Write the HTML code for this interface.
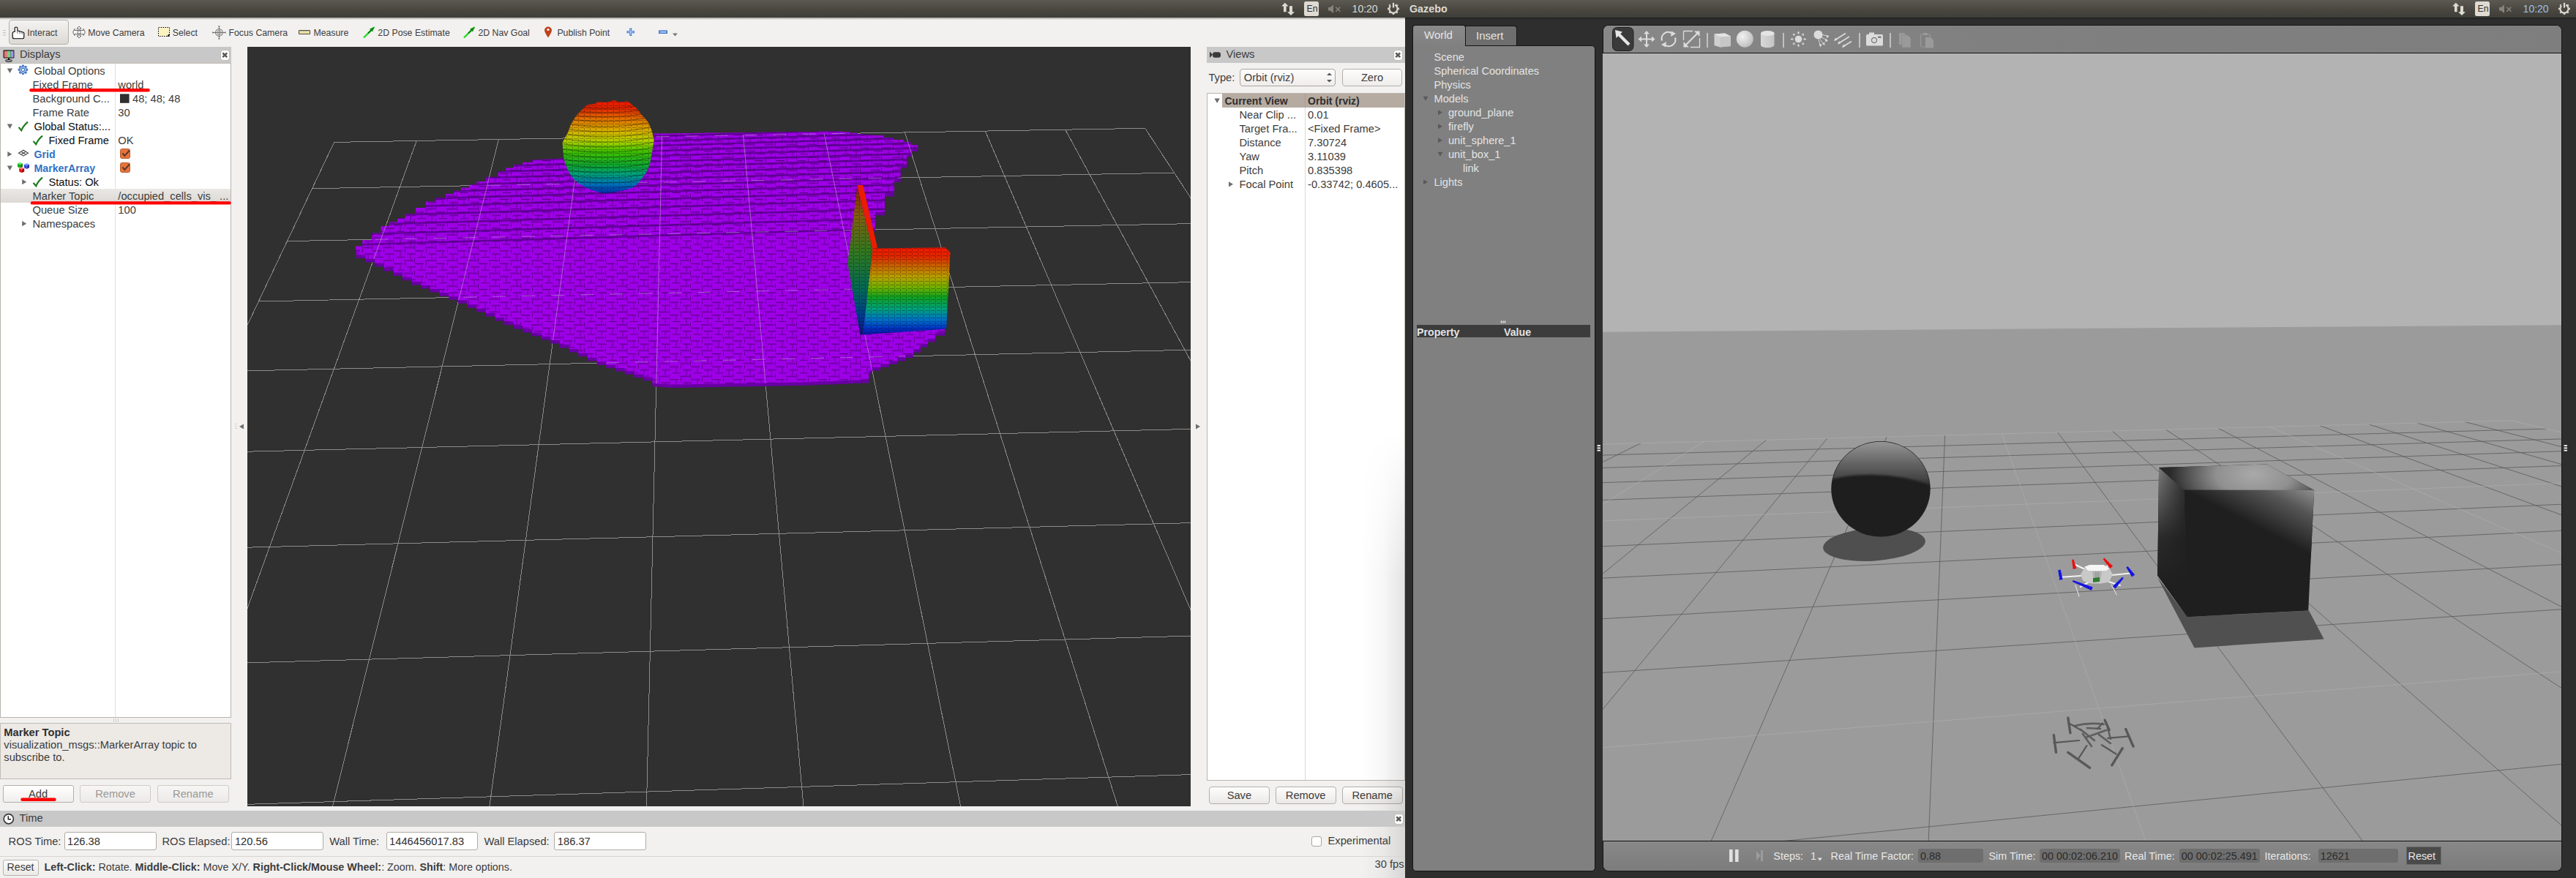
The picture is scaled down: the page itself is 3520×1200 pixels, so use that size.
<!DOCTYPE html><html><head><meta charset="utf-8"><style>html,body{margin:0;padding:0;}body{width:3520px;height:1200px;overflow:hidden;position:relative;background:#f2f1f0;font-family:"Liberation Sans",sans-serif;}.r{position:absolute;}.t{position:absolute;white-space:nowrap;}b{font-weight:bold;}</style></head><body><div class="r" style="left:0px;top:24px;width:1920px;height:1176px;background:#f2f1f0;"></div><div class="r" style="left:0px;top:24px;width:1920px;height:40px;background:#f2f1f0;"></div><div class="r" style="left:12px;top:27px;width:82px;height:34px;border:1px solid #b5b1ab;border-radius:4px;box-sizing:border-box;background:linear-gradient(#f4f3f1,#dcd9d5);"></div><svg class="r" style="left:0;top:24px" width="960" height="40" viewBox="0 24 960 40"><path d="M4 41.5h4M4 44.7h4M4 47.9h4" stroke="#c9c6c2" stroke-width="1.2"/><path d="M20.2 44 V38.3 Q20.2 37 22 37 Q23.8 37 23.8 38.3 V42.3 H25.8 Q27 42.3 27 43.2 H28.7 Q30.2 43.2 30.2 44 H31.3 Q32.8 44 32.8 45.2 V50.8 Q32.8 52.8 31 52.8 H19.5 Q17.2 52.8 17.2 50.5 V45.5 Q17.2 43.5 19.2 43.5 H20.2 Z" fill="#fff" stroke="#000" stroke-width="1.1"/><path d="M23.8 42.5v3.5M27 43.5v3M30.2 44.3v2.7" stroke="#555" stroke-width="0.8"/><g transform="translate(108 44)" stroke="#555" fill="#fff" stroke-width="0.9"><path d="M0 -8 L-3 -5 L-1 -5 L-1 -2.5 L-6 -2.5 L-6 -4.5 L-8 -1 L-8 1 L-6 4.5 L-6 2.5 L-1 2.5 L-1 5 L-3 5 L0 8 L3 5 L1 5 L1 2.5 L6 2.5 L6 4.5 L8 1 L8 -1 L6 -4.5 L6 -2.5 L1 -2.5 L1 -5 L3 -5 Z"/><circle r="2.2" fill="none"/></g><rect x="216.5" y="37.5" width="15" height="12" fill="#fbf4c0" stroke="#000" stroke-width="1" stroke-dasharray="1.5 1.5"/><path d="M228 49.5 L231.5 46 L231.5 49.5 Z" fill="#000"/><g transform="translate(299.4 44.5)" fill="none" stroke="#707070" stroke-width="1"><circle r="5"/><path d="M0 -8.5V8.5M-8.5 0H8.5"/><path d="M-2.5 -2.5h5v5h-5z" stroke-width="0.7"/><path d="M-1 -8.5h2M-1 8.5h2M-8.5 -1v2M8.5 -1v2" stroke-width="1.5"/></g><rect x="408.5" y="41.5" width="15" height="5" rx="0.8" fill="#efe6a6" stroke="#4a4a4a" stroke-width="1.1"/><path d="M411 42v2M413 42v1.5M415 42v2M417 42v1.5M419 42v2M421 42v1.5" stroke="#777" stroke-width="0.5"/><path d="M497 51.5 L511.5 37" stroke="#22dd22" stroke-width="2.4"/><path d="M511.5 37 L505 39.5 L509 43.5 Z" fill="#118811"/><path d="M503 45.5 L507 41.5" stroke="#0a5a0a" stroke-width="1.4"/><path d="M634 51.5 L648.5 37" stroke="#22dd22" stroke-width="2.4"/><path d="M648.5 37 L642 39.5 L646 43.5 Z" fill="#118811"/><path d="M640 45.5 L644 41.5" stroke="#0a5a0a" stroke-width="1.4"/><path d="M749 51.5 Q744 44 744 41.5 A5 5 0 0 1 754 41.5 Q754 44 749 51.5 Z" fill="#c0421c"/><circle cx="749" cy="40.5" r="1.6" fill="#fff"/><path d="M861.8 38.5V49M856.5 43.8H867" stroke="#3a72c8" stroke-width="3"/><path d="M861.8 39.5V48M857.5 43.8H866" stroke="#cfe0ff" stroke-width="1"/><rect x="900" y="41.5" width="12" height="4.5" fill="#3a72c8"/><rect x="901.5" y="43" width="9" height="1.5" fill="#cfe0ff"/><path d="M919 45.5 L926 45.5 L922.5 49.5 Z" fill="#777"/></svg><div class="t" style="left:37.3px;top:38.8px;font-size:12.3px;line-height:12.3px;color:#3c3c3c;font-weight:normal;">Interact</div><div class="t" style="left:120.3px;top:38.8px;font-size:12.3px;line-height:12.3px;color:#3c3c3c;font-weight:normal;">Move Camera</div><div class="t" style="left:235.8px;top:38.8px;font-size:12.3px;line-height:12.3px;color:#3c3c3c;font-weight:normal;">Select</div><div class="t" style="left:312.5px;top:38.8px;font-size:12.3px;line-height:12.3px;color:#3c3c3c;font-weight:normal;">Focus Camera</div><div class="t" style="left:428.4px;top:38.8px;font-size:12.3px;line-height:12.3px;color:#3c3c3c;font-weight:normal;">Measure</div><div class="t" style="left:516.3px;top:38.8px;font-size:12.3px;line-height:12.3px;color:#3c3c3c;font-weight:normal;">2D Pose Estimate</div><div class="t" style="left:653.4px;top:38.8px;font-size:12.3px;line-height:12.3px;color:#3c3c3c;font-weight:normal;">2D Nav Goal</div><div class="t" style="left:761.4px;top:38.8px;font-size:12.3px;line-height:12.3px;color:#3c3c3c;font-weight:normal;">Publish Point</div><div class="r" style="left:0px;top:64px;width:316px;height:22px;background:#c8c8c8;"></div><svg class="r" style="left:0;top:64px" width="24" height="22"><rect x="4.6" y="4.6" width="14.8" height="10.8" rx="1" fill="#000"/><rect x="5.6" y="5.6" width="4.4" height="9" fill="#e07a7a"/><rect x="10" y="5.6" width="4.6" height="9" fill="#7ad07a"/><rect x="14.6" y="5.6" width="4" height="9" fill="#9a9ae8"/><path d="M11 15.5h2v2h-2z" fill="#000"/><ellipse cx="12" cy="19" rx="4.6" ry="1.3" fill="none" stroke="#000" stroke-width="1"/></svg><div class="t" style="left:27.0px;top:67.4px;font-size:14.7px;line-height:14.7px;color:#3c3c3c;font-weight:normal;">Displays</div><div class="r" style="left:301px;top:68px;width:12.5px;height:14.5px;box-sizing:border-box;border:1px solid #c2bcb4;border-radius:4px;background:#fff;"></div><svg class="r" style="left:301px;top:68px" width="13" height="15"><path d="M3.3 4.3L9.2 10.2M9.2 4.3L3.3 10.2" stroke="#5a5a5a" stroke-width="2.6"/></svg><div class="r" style="left:0px;top:86px;width:316px;height:895px;background:#fff;border:1px solid #b9b5af;border-top-color:#c2beb8;box-sizing:border-box;"></div><div class="r" style="left:157px;top:87px;width:1px;height:893px;background:#e4e2df;"></div><div class="r" style="left:1px;top:258px;width:314px;height:19px;background:linear-gradient(#eae8e5,#dcd9d5);"></div><div class="t" style="left:46.5px;top:89.9px;font-size:14.7px;line-height:14.7px;color:#3c3c3c;font-weight:normal;">Global Options</div><div class="t" style="left:44.5px;top:108.9px;font-size:14.7px;line-height:14.7px;color:#3c3c3c;font-weight:normal;">Fixed Frame</div><div class="t" style="left:161.3px;top:108.9px;font-size:14.7px;line-height:14.7px;color:#3c3c3c;font-weight:normal;">world</div><div class="t" style="left:44.5px;top:127.9px;font-size:14.7px;line-height:14.7px;color:#3c3c3c;font-weight:normal;">Background C...</div><div class="t" style="left:181.0px;top:127.9px;font-size:14.7px;line-height:14.7px;color:#3c3c3c;font-weight:normal;">48; 48; 48</div><div class="t" style="left:44.5px;top:146.9px;font-size:14.7px;line-height:14.7px;color:#3c3c3c;font-weight:normal;">Frame Rate</div><div class="t" style="left:161.3px;top:146.9px;font-size:14.7px;line-height:14.7px;color:#3c3c3c;font-weight:normal;">30</div><div class="t" style="left:46.5px;top:165.9px;font-size:14.7px;line-height:14.7px;color:#0c0c0c;font-weight:normal;">Global Status:...</div><div class="t" style="left:66.4px;top:184.9px;font-size:14.7px;line-height:14.7px;color:#0c0c0c;font-weight:normal;">Fixed Frame</div><div class="t" style="left:161.3px;top:184.9px;font-size:14.7px;line-height:14.7px;color:#3c3c3c;font-weight:normal;">OK</div><div class="t" style="left:46.5px;top:204.3px;font-size:14.2px;line-height:14.2px;color:#2f72c4;font-weight:bold;">Grid</div><div class="t" style="left:46.5px;top:223.3px;font-size:14.2px;line-height:14.2px;color:#2f72c4;font-weight:bold;">MarkerArray</div><div class="t" style="left:66.4px;top:241.9px;font-size:14.7px;line-height:14.7px;color:#0c0c0c;font-weight:normal;">Status: Ok</div><div class="t" style="left:44.5px;top:260.9px;font-size:14.7px;line-height:14.7px;color:#3c3c3c;font-weight:normal;">Marker Topic</div><div class="t" style="left:161.3px;top:260.9px;font-size:14.7px;line-height:14.7px;color:#3c3c3c;font-weight:normal;">/occupied_cells_vis_ ...</div><div class="t" style="left:44.5px;top:279.9px;font-size:14.7px;line-height:14.7px;color:#3c3c3c;font-weight:normal;">Queue Size</div><div class="t" style="left:161.3px;top:279.9px;font-size:14.7px;line-height:14.7px;color:#3c3c3c;font-weight:normal;">100</div><div class="t" style="left:44.5px;top:298.9px;font-size:14.7px;line-height:14.7px;color:#3c3c3c;font-weight:normal;">Namespaces</div><svg class="r" style="left:0;top:0" width="320" height="320"><path d="M9.8 93.5 L17.1 93.5 L13.450000000000001 99.9 Z" fill="#6e6e6e"/><g transform="translate(31.4 95.3)"><path d="M4.25 -1.76 L4.53 -0.79 L6.15 -0.78 L6.15 0.78 L4.53 0.79 L4.25 1.76 L3.76 2.65 L4.90 3.80 L3.80 4.90 L2.65 3.76 L1.76 4.25 L0.79 4.53 L0.78 6.15 L-0.78 6.15 L-0.79 4.53 L-1.76 4.25 L-2.65 3.76 L-3.80 4.90 L-4.90 3.80 L-3.76 2.65 L-4.25 1.76 L-4.53 0.79 L-6.15 0.78 L-6.15 -0.78 L-4.53 -0.79 L-4.25 -1.76 L-3.76 -2.65 L-4.90 -3.80 L-3.80 -4.90 L-2.65 -3.76 L-1.76 -4.25 L-0.79 -4.53 L-0.78 -6.15 L0.78 -6.15 L0.79 -4.53 L1.76 -4.25 L2.65 -3.76 L3.80 -4.90 L4.90 -3.80 L3.76 -2.65 Z" fill="#c5d6ef" stroke="#3a72c0" stroke-width="1.3" stroke-linejoin="round"/><circle r="2.2" fill="#fff" stroke="#3a72c0" stroke-width="1.2"/></g><path d="M9.8 169.5 L17.1 169.5 L13.450000000000001 175.89999999999998 Z" fill="#6e6e6e"/><path d="M25.5 173.89999999999998 L29.2 178.2 Q32 171.7 38 166.7" fill="none" stroke="#1d7a1d" stroke-width="2.2"/><path d="M45.5 192.89999999999998 L49.2 197.2 Q52 190.7 58 185.7" fill="none" stroke="#1d7a1d" stroke-width="2.2"/><path d="M10.3 207.1 L16.3 210.7 L10.3 214.29999999999998 Z" fill="#6e6e6e"/><g transform="translate(32 209.2)" fill="none" stroke="#444" stroke-width="1.1"><path d="M-6.5 0 L0 -4 L6.5 0 L0 4 Z M-3.25 -2 L3.25 2 M3.25 -2 L-3.25 2"/></g><path d="M9.8 226.5 L17.1 226.5 L13.450000000000001 232.89999999999998 Z" fill="#6e6e6e"/><path d="M24 223.45 L27.5 221.7 L31 223.45 L27.5 225.2 Z" fill="#66ee66"/><path d="M24 223.45 L27.5 225.2 L27.5 229.75 L24 228.0 Z" fill="#11aa11"/><path d="M31 223.45 L27.5 225.2 L27.5 229.75 L31 228.0 Z" fill="#008800"/><path d="M33 224.64999999999998 L36.5 222.89999999999998 L40 224.64999999999998 L36.5 226.39999999999998 Z" fill="#8899ff"/><path d="M33 224.64999999999998 L36.5 226.39999999999998 L36.5 230.95 L33 229.2 Z" fill="#3344dd"/><path d="M40 224.64999999999998 L36.5 226.39999999999998 L36.5 230.95 L40 229.2 Z" fill="#2233bb"/><path d="M26.2 230.04999999999998 L29.7 228.29999999999998 L33.2 230.04999999999998 L29.7 231.79999999999998 Z" fill="#ff7777"/><path d="M26.2 230.04999999999998 L29.7 231.79999999999998 L29.7 236.35 L26.2 234.6 Z" fill="#dd1111"/><path d="M33.2 230.04999999999998 L29.7 231.79999999999998 L29.7 236.35 L33.2 234.6 Z" fill="#aa0000"/><path d="M30.2 245.1 L36.2 248.7 L30.2 252.29999999999998 Z" fill="#6e6e6e"/><path d="M45.5 249.89999999999998 L49.2 254.2 Q52 247.7 58 242.7" fill="none" stroke="#1d7a1d" stroke-width="2.2"/><path d="M30.2 302.09999999999997 L36.2 305.7 L30.2 309.3 Z" fill="#6e6e6e"/><rect x="164.5" y="203.5" width="13" height="13" rx="2.2" fill="#e8733a" stroke="#b65a2d" stroke-width="1"/><path d="M167.3 209.3 L170.3 213.0 L177 205.5" fill="none" stroke="#5a3a2a" stroke-width="2"/><rect x="164.5" y="222.5" width="13" height="13" rx="2.2" fill="#e8733a" stroke="#b65a2d" stroke-width="1"/><path d="M167.3 228.3 L170.3 232.0 L177 224.5" fill="none" stroke="#5a3a2a" stroke-width="2"/><rect x="164" y="128.4" width="12.6" height="12.4" fill="#303030"/><path d="M42.5 123.2 L202.5 123.2" stroke="#f00" stroke-width="4.6" stroke-linecap="round"/><path d="M44 277.4 L313.5 277.4" stroke="#f00" stroke-width="4.4" stroke-linecap="round"/></svg><svg class="r" style="left:150px;top:980px" width="20" height="8"><path d="M5.5 2v5M8.5 2v5M11.5 2v5" stroke="#c9c6c2" stroke-width="0.9"/></svg><div class="r" style="left:0px;top:988px;width:316px;height:77px;background:#ede9e5;border:1px solid #c0bcb6;box-sizing:border-box;"></div><div class="t" style="left:5.3px;top:993.6px;font-size:14.7px;line-height:14.7px;color:#2f2f2f;font-weight:bold;">Marker Topic</div><div class="t" style="left:5.3px;top:1010.6px;font-size:14.7px;line-height:14.7px;color:#3c3c3c;font-weight:normal;">visualization_msgs::MarkerArray topic to</div><div class="t" style="left:5.3px;top:1027.6px;font-size:14.7px;line-height:14.7px;color:#3c3c3c;font-weight:normal;">subscribe to.</div><div class="r" style="left:3.5px;top:1072.5px;width:97.0px;height:24px;box-sizing:border-box;border:1px solid #b3afa9;border-radius:3px;background:linear-gradient(#ffffff,#f0eeec);"></div><div class="t" style="left:-248.0px;width:600px;text-align:center;top:1077.6px;font-size:14.7px;line-height:14.7px;color:#3c3c3c;font-weight:normal;">Add</div><div class="r" style="left:109px;top:1072.5px;width:97px;height:24px;box-sizing:border-box;border:1px solid #cfcbc6;border-radius:3px;background:linear-gradient(#f7f6f5,#eceae8);"></div><div class="t" style="left:-142.5px;width:600px;text-align:center;top:1077.6px;font-size:14.7px;line-height:14.7px;color:#9a9895;font-weight:normal;">Remove</div><div class="r" style="left:215px;top:1072.5px;width:97.5px;height:24px;box-sizing:border-box;border:1px solid #cfcbc6;border-radius:3px;background:linear-gradient(#f7f6f5,#eceae8);"></div><div class="t" style="left:-36.2px;width:600px;text-align:center;top:1077.6px;font-size:14.7px;line-height:14.7px;color:#9a9895;font-weight:normal;">Rename</div><svg class="r" style="left:0;top:1080px" width="120" height="20"><path d="M30.5 12.8 L74.5 12.8" stroke="#f00" stroke-width="4.4" stroke-linecap="round"/></svg><div class="r" style="left:1649px;top:64px;width:271px;height:22px;background:#c8c8c8;"></div><svg class="r" style="left:1649px;top:64px" width="22" height="22"><path d="M4 6.5 L8 10.8 L4 15Z" fill="#3a3a3a"/><rect x="8" y="7.3" width="11" height="7.5" rx="3" fill="#3a3a3a"/></svg><div class="t" style="left:1675.5px;top:67.4px;font-size:14.7px;line-height:14.7px;color:#3c3c3c;font-weight:normal;">Views</div><div class="r" style="left:1904px;top:68px;width:12.5px;height:14.5px;box-sizing:border-box;border:1px solid #c2bcb4;border-radius:4px;background:#fff;"></div><svg class="r" style="left:1904px;top:68px" width="13" height="15"><path d="M3.3 4.3L9.2 10.2M9.2 4.3L3.3 10.2" stroke="#5a5a5a" stroke-width="2.6"/></svg><div class="t" style="left:1651.4px;top:99.1px;font-size:14.7px;line-height:14.7px;color:#3c3c3c;font-weight:normal;">Type:</div><div class="r" style="left:1694px;top:93.5px;width:131px;height:24px;box-sizing:border-box;border:1px solid #aaa6a0;border-radius:4px;background:linear-gradient(#fdfdfd,#efedeb);"></div><div class="t" style="left:1699.8px;top:99.1px;font-size:14.7px;line-height:14.7px;color:#3c3c3c;font-weight:normal;">Orbit (rviz)</div><svg class="r" style="left:1810px;top:95px" width="14" height="22"><path d="M3 8 L10 8 L6.5 4.5 Z M3 14 L10 14 L6.5 17.5 Z" fill="#555"/></svg><div class="r" style="left:1834px;top:93.5px;width:82px;height:24px;box-sizing:border-box;border:1px solid #b3afa9;border-radius:4px;background:linear-gradient(#fdfdfd,#efedeb);"></div><div class="t" style="left:1575.0px;width:600px;text-align:center;top:99.1px;font-size:14.7px;line-height:14.7px;color:#3c3c3c;font-weight:normal;">Zero</div><div class="r" style="left:1649px;top:127px;width:271px;height:940px;background:#fff;border:1px solid #b9b5af;border-right:none;box-sizing:border-box;"></div><div class="r" style="left:1670px;top:128px;width:250px;height:19px;background:#b6aba1;"></div><div class="r" style="left:1783px;top:128px;width:1px;height:938px;background:#dcdad7;"></div><div class="r" style="left:1783px;top:128px;width:1px;height:19px;background:#a89d93;"></div><div class="t" style="left:1673.5px;top:131.1px;font-size:14.0px;line-height:14.0px;color:#2e2e2e;font-weight:bold;">Current View</div><div class="t" style="left:1787.0px;top:131.1px;font-size:14.0px;line-height:14.0px;color:#2e2e2e;font-weight:bold;">Orbit (rviz)</div><div class="t" style="left:1693.5px;top:149.6px;font-size:14.7px;line-height:14.7px;color:#3c3c3c;font-weight:normal;">Near Clip ...</div><div class="t" style="left:1787.0px;top:149.6px;font-size:14.7px;line-height:14.7px;color:#3c3c3c;font-weight:normal;">0.01</div><div class="t" style="left:1693.5px;top:168.6px;font-size:14.7px;line-height:14.7px;color:#3c3c3c;font-weight:normal;">Target Fra...</div><div class="t" style="left:1787.0px;top:168.6px;font-size:14.7px;line-height:14.7px;color:#3c3c3c;font-weight:normal;">&lt;Fixed Frame&gt;</div><div class="t" style="left:1693.5px;top:187.6px;font-size:14.7px;line-height:14.7px;color:#3c3c3c;font-weight:normal;">Distance</div><div class="t" style="left:1787.0px;top:187.6px;font-size:14.7px;line-height:14.7px;color:#3c3c3c;font-weight:normal;">7.30724</div><div class="t" style="left:1693.5px;top:206.6px;font-size:14.7px;line-height:14.7px;color:#3c3c3c;font-weight:normal;">Yaw</div><div class="t" style="left:1787.0px;top:206.6px;font-size:14.7px;line-height:14.7px;color:#3c3c3c;font-weight:normal;">3.11039</div><div class="t" style="left:1693.5px;top:225.6px;font-size:14.7px;line-height:14.7px;color:#3c3c3c;font-weight:normal;">Pitch</div><div class="t" style="left:1787.0px;top:225.6px;font-size:14.7px;line-height:14.7px;color:#3c3c3c;font-weight:normal;">0.835398</div><div class="t" style="left:1693.5px;top:244.6px;font-size:14.7px;line-height:14.7px;color:#3c3c3c;font-weight:normal;">Focal Point</div><div class="t" style="left:1787.0px;top:244.6px;font-size:14.7px;line-height:14.7px;color:#3c3c3c;font-weight:normal;">-0.33742; 0.4605...</div><svg class="r" style="left:1640px;top:120px" width="60" height="160" viewBox="1640 120 60 160"><path d="M1659.5 134.60000000000002 L1666.8 134.60000000000002 L1663.15 141.0 Z" fill="#6e6e6e"/><path d="M1679 248.20000000000002 L1685 251.8 L1679 255.4 Z" fill="#6e6e6e"/></svg><div class="r" style="left:1652.3px;top:1074.5px;width:82.29999999999995px;height:24px;box-sizing:border-box;border:1px solid #b3afa9;border-radius:4px;background:linear-gradient(#fdfdfd,#ebe9e6);"></div><div class="t" style="left:1393.4px;width:600px;text-align:center;top:1079.6px;font-size:14.7px;line-height:14.7px;color:#3c3c3c;font-weight:normal;">Save</div><div class="r" style="left:1743px;top:1074.5px;width:82.5px;height:24px;box-sizing:border-box;border:1px solid #b3afa9;border-radius:4px;background:linear-gradient(#fdfdfd,#ebe9e6);"></div><div class="t" style="left:1484.2px;width:600px;text-align:center;top:1079.6px;font-size:14.7px;line-height:14.7px;color:#3c3c3c;font-weight:normal;">Remove</div><div class="r" style="left:1834px;top:1074.5px;width:82.5px;height:24px;box-sizing:border-box;border:1px solid #b3afa9;border-radius:4px;background:linear-gradient(#fdfdfd,#ebe9e6);"></div><div class="t" style="left:1575.2px;width:600px;text-align:center;top:1079.6px;font-size:14.7px;line-height:14.7px;color:#3c3c3c;font-weight:normal;">Rename</div><div class="r" style="left:338px;top:64px;width:1289px;height:1038px;background:#303030;"></div><svg class="r" style="left:338px;top:64px" width="1289" height="1038" viewBox="338 64 1289 1038"><defs><pattern id="vox" patternUnits="userSpaceOnUse" width="29" height="17.6"><rect width="29" height="17.6" fill="#9d00e6"/><path d="M1 4 H14 M16 8.4 H28 M5 12.8 H17 M20 17.2 H29 M0 17.2 H2" stroke="#48006c" stroke-width="1.1" opacity="0.8"/><path d="M15.5 0.5 V6.5 M2.5 6 V11 M25 10 V16 M10 14 V17.6 M10 0 V2" stroke="#48006c" stroke-width="1" opacity="0.75"/></pattern><linearGradient id="sph" x1="0" y1="0" x2="0" y2="1"><stop offset="0" stop-color="#e81800"/><stop offset="0.09" stop-color="#e02800"/><stop offset="0.2" stop-color="#e07000"/><stop offset="0.33" stop-color="#d8b000"/><stop offset="0.44" stop-color="#b0d000"/><stop offset="0.55" stop-color="#40c000"/><stop offset="0.7" stop-color="#10a830"/><stop offset="0.8" stop-color="#00a080"/><stop offset="0.92" stop-color="#0068c0"/><stop offset="1" stop-color="#0030b0"/></linearGradient><linearGradient id="wallf" x1="0" y1="339" x2="0" y2="459" gradientUnits="userSpaceOnUse"><stop offset="0" stop-color="#f01800"/><stop offset="0.1" stop-color="#e02800"/><stop offset="0.2" stop-color="#c86000"/><stop offset="0.33" stop-color="#b8a000"/><stop offset="0.45" stop-color="#70b000"/><stop offset="0.56" stop-color="#10a020"/><stop offset="0.7" stop-color="#00a080"/><stop offset="0.82" stop-color="#0070c8"/><stop offset="0.92" stop-color="#0030c0"/><stop offset="1" stop-color="#1010a0"/></linearGradient><linearGradient id="walls" x1="1165" y1="255" x2="1185" y2="457" gradientUnits="userSpaceOnUse"><stop offset="0" stop-color="#901800"/><stop offset="0.2" stop-color="#806010"/><stop offset="0.45" stop-color="#307820"/><stop offset="0.7" stop-color="#006858"/><stop offset="0.88" stop-color="#003890"/><stop offset="1" stop-color="#101070"/></linearGradient><pattern id="vox2" patternUnits="userSpaceOnUse" width="8" height="5"><path d="M0 4.5 H6" stroke="#000" stroke-width="0.8" opacity="0.35"/><path d="M6.5 0 V3.5" stroke="#000" stroke-width="0.8" opacity="0.35"/></pattern><clipPath id="pclip"><polygon points="485.6,336.5 495.3,336.5 495.3,328.1 508.0,328.1 508.0,318.6 520.6,318.6 520.6,309.1 531.8,309.1 531.8,303.5 543.1,303.5 543.1,297.9 554.3,297.9 554.3,292.3 568.0,292.3 568.0,283.9 581.7,283.9 581.7,275.4 595.4,275.4 595.4,270.1 609.1,270.1 609.1,264.9 619.6,264.9 619.6,260.7 630.2,260.7 630.2,256.4 640.8,256.4 640.8,252.2 651.3,252.2 651.3,248.0 663.9,248.0 663.9,241.7 680.8,241.7 680.8,234.1 691.3,234.1 691.3,229.4 701.9,229.4 701.9,224.8 714.5,224.8 714.5,221.7 727.2,221.7 727.2,218.5 739.8,218.5 739.8,217.8 752.5,217.8 752.5,217.1 765.1,217.1 765.1,216.4 776.7,216.4 776.7,209.3 788.4,209.3 788.4,202.1 800.0,202.1 800.0,195.0 811.6,195.0 811.6,193.4 823.2,193.4 823.2,191.9 834.9,191.9 834.9,190.3 846.5,190.3 846.5,188.8 858.1,188.8 858.1,187.2 869.8,187.2 869.8,185.6 881.4,185.6 881.4,184.1 893.0,184.1 893.0,182.5 904.7,182.5 904.7,182.4 916.5,182.4 916.5,182.2 928.2,182.2 928.2,182.1 940.0,182.1 940.0,181.9 951.7,181.9 951.7,181.8 963.5,181.8 963.5,181.6 975.2,181.6 975.2,181.5 986.9,181.5 986.9,181.4 998.7,181.4 998.7,181.2 1010.4,181.2 1010.4,181.1 1022.2,181.1 1022.2,180.9 1033.9,180.9 1033.9,180.8 1045.7,180.8 1045.7,180.6 1057.4,180.6 1057.4,180.5 1069.1,180.5 1069.1,180.4 1080.9,180.4 1080.9,180.2 1092.6,180.2 1092.6,180.1 1104.4,180.1 1104.4,179.9 1116.1,179.9 1116.1,179.8 1127.9,179.8 1127.9,179.6 1139.6,179.6 1139.6,179.5 1150.4,179.5 1150.4,180.6 1161.2,180.6 1161.2,181.7 1172.1,181.7 1172.1,182.9 1182.9,182.9 1182.9,184.0 1193.7,184.0 1193.7,185.1 1207.4,185.1 1207.4,188.0 1221.1,188.0 1221.1,190.9 1234.8,190.9 1234.8,193.8 1244.5,193.8 1244.5,198.1 1254.3,198.1 1254.3,202.4 1245.6,202.4 1245.6,209.8 1239.1,209.8 1239.1,224.9 1230.5,224.9 1230.5,244.4 1221.8,244.4 1221.8,263.9 1208.9,263.9 1208.9,289.8 1195.9,289.8 1195.9,311.5 1180.0,311.5 1180.0,340.0 1176.0,340.0 1176.0,400.0 1187.5,400.0 1187.5,405.4 1199.0,405.4 1199.0,410.8 1210.5,410.8 1210.5,416.3 1222.0,416.3 1222.0,421.7 1233.5,421.7 1233.5,427.1 1245.1,427.1 1245.1,432.5 1256.6,432.5 1256.6,437.9 1268.1,437.9 1268.1,443.4 1279.6,443.4 1279.6,448.8 1291.1,448.8 1291.1,454.2 1278.1,454.2 1278.1,462.9 1268.0,462.9 1268.0,470.1 1257.9,470.1 1257.9,477.3 1247.8,477.3 1247.8,484.5 1237.0,484.5 1237.0,488.9 1226.2,488.9 1226.2,493.2 1214.7,493.2 1214.7,497.5 1203.1,497.5 1203.1,501.9 1191.6,501.9 1191.6,506.2 1187.2,506.2 1187.2,519.1 1175.9,519.1 1175.9,519.5 1164.5,519.5 1164.5,520.0 1153.2,520.0 1153.2,520.4 1141.8,520.4 1141.8,520.9 1130.5,520.9 1130.5,521.3 1119.1,521.3 1119.1,521.7 1107.8,521.7 1107.8,522.2 1096.4,522.2 1096.4,522.6 1084.0,522.6 1084.0,522.8 1071.7,522.8 1071.7,523.0 1059.3,523.0 1059.3,523.2 1046.9,523.2 1046.9,523.5 1034.6,523.5 1034.6,523.7 1022.2,523.7 1022.2,523.9 1009.9,523.9 1009.9,524.1 997.5,524.1 997.5,524.3 985.1,524.3 985.1,524.5 972.8,524.5 972.8,524.7 960.4,524.7 960.4,525.0 948.0,525.0 948.0,525.2 935.7,525.2 935.7,525.4 923.3,525.4 923.3,525.6 913.2,525.6 913.2,524.9 903.1,524.9 903.1,524.2 893.0,524.2 893.0,523.5 891.6,523.5 891.6,515.7 878.9,515.7 878.9,511.5 866.3,511.5 866.3,507.3 853.6,507.3 853.6,503.0 841.0,503.0 841.0,498.8 828.3,498.8 828.3,494.6 815.7,494.6 815.7,488.7 803.0,488.7 803.0,482.8 790.4,482.8 790.4,476.9 777.7,476.9 777.7,471.0 765.1,471.0 765.1,465.1 752.5,465.1 752.5,460.0 739.8,460.0 739.8,455.0 727.2,455.0 727.2,449.9 714.5,449.9 714.5,444.9 701.9,444.9 701.9,439.8 689.2,439.8 689.2,433.9 676.6,433.9 676.6,428.0 663.9,428.0 663.9,422.1 651.3,422.1 651.3,416.2 638.6,416.2 638.6,410.3 626.0,410.3 626.0,405.2 613.3,405.2 613.3,400.2 600.7,400.2 600.7,395.1 588.0,395.1 588.0,390.1 575.4,390.1 575.4,385.0 562.8,385.0 562.8,378.7 550.1,378.7 550.1,372.4 537.4,372.4 537.4,366.0 524.8,366.0 524.8,359.7 512.2,359.7 512.2,354.1 499.5,354.1 499.5,348.5 486.9,348.5 486.9,342.9"/></clipPath></defs><path d="M456.6 194.4L-248.8 1680.8M569.2 192.4L34.9 1669.3M681.4 190.5L316.1 1657.9M793.2 188.6L594.8 1646.6M904.6 186.7L871.1 1635.5M1015.6 184.7L1144.9 1624.4M1126.2 182.8L1416.4 1613.4M1236.4 180.9L1685.5 1602.5M1346.2 179.0L1952.2 1591.7M1455.7 177.1L2216.7 1581.0M1564.7 175.3L2478.8 1570.4M456.6 194.4L1564.7 175.3M426.6 257.7L1604.6 236.2M392.5 329.6L1649.9 305.2M353.3 412.0L1701.6 384.1M308.1 507.5L1761.2 475.2M255.0 619.2L1830.9 581.5M192.0 752.0L1913.2 707.2M116.0 912.2L2012.1 858.1M22.4 1109.3L2133.0 1042.6M-95.5 1357.8L2284.2 1273.4M-248.8 1680.8L2478.8 1570.4" stroke="#8c8c8c" stroke-width="1" fill="none" shape-rendering="crispEdges"/><polygon points="485.6,341.0 495.3,341.0 495.3,332.6 508.0,332.6 508.0,323.1 520.6,323.1 520.6,313.6 531.8,313.6 531.8,308.0 543.1,308.0 543.1,302.4 554.3,302.4 554.3,296.8 568.0,296.8 568.0,288.4 581.7,288.4 581.7,279.9 595.4,279.9 595.4,274.6 609.1,274.6 609.1,269.4 619.6,269.4 619.6,265.2 630.2,265.2 630.2,260.9 640.8,260.9 640.8,256.7 651.3,256.7 651.3,252.5 663.9,252.5 663.9,246.2 680.8,246.2 680.8,238.6 691.3,238.6 691.3,233.9 701.9,233.9 701.9,229.3 714.5,229.3 714.5,226.2 727.2,226.2 727.2,223.0 739.8,223.0 739.8,222.3 752.5,222.3 752.5,221.6 765.1,221.6 765.1,220.9 776.7,220.9 776.7,213.8 788.4,213.8 788.4,206.6 800.0,206.6 800.0,199.5 811.6,199.5 811.6,197.9 823.2,197.9 823.2,196.4 834.9,196.4 834.9,194.8 846.5,194.8 846.5,193.2 858.1,193.2 858.1,191.7 869.8,191.7 869.8,190.1 881.4,190.1 881.4,188.6 893.0,188.6 893.0,187.0 904.7,187.0 904.7,186.9 916.5,186.9 916.5,186.7 928.2,186.7 928.2,186.6 940.0,186.6 940.0,186.4 951.7,186.4 951.7,186.3 963.5,186.3 963.5,186.1 975.2,186.1 975.2,186.0 986.9,186.0 986.9,185.9 998.7,185.9 998.7,185.7 1010.4,185.7 1010.4,185.6 1022.2,185.6 1022.2,185.4 1033.9,185.4 1033.9,185.3 1045.7,185.3 1045.7,185.1 1057.4,185.1 1057.4,185.0 1069.1,185.0 1069.1,184.9 1080.9,184.9 1080.9,184.7 1092.6,184.7 1092.6,184.6 1104.4,184.6 1104.4,184.4 1116.1,184.4 1116.1,184.3 1127.9,184.3 1127.9,184.1 1139.6,184.1 1139.6,184.0 1150.4,184.0 1150.4,185.1 1161.2,185.1 1161.2,186.2 1172.1,186.2 1172.1,187.4 1182.9,187.4 1182.9,188.5 1193.7,188.5 1193.7,189.6 1207.4,189.6 1207.4,192.5 1221.1,192.5 1221.1,195.4 1234.8,195.4 1234.8,198.3 1244.5,198.3 1244.5,202.6 1254.3,202.6 1254.3,206.9 1245.6,206.9 1245.6,214.3 1239.1,214.3 1239.1,229.4 1230.5,229.4 1230.5,248.9 1221.8,248.9 1221.8,268.4 1208.9,268.4 1208.9,294.3 1195.9,294.3 1195.9,316.0 1180.0,316.0 1180.0,344.5 1176.0,344.5 1176.0,404.5 1187.5,404.5 1187.5,409.9 1199.0,409.9 1199.0,415.3 1210.5,415.3 1210.5,420.8 1222.0,420.8 1222.0,426.2 1233.5,426.2 1233.5,431.6 1245.1,431.6 1245.1,437.0 1256.6,437.0 1256.6,442.4 1268.1,442.4 1268.1,447.9 1279.6,447.9 1279.6,453.3 1291.1,453.3 1291.1,458.7 1278.1,458.7 1278.1,467.4 1268.0,467.4 1268.0,474.6 1257.9,474.6 1257.9,481.8 1247.8,481.8 1247.8,489.0 1237.0,489.0 1237.0,493.4 1226.2,493.4 1226.2,497.7 1214.7,497.7 1214.7,502.0 1203.1,502.0 1203.1,506.4 1191.6,506.4 1191.6,510.7 1187.2,510.7 1187.2,523.6 1175.9,523.6 1175.9,524.0 1164.5,524.0 1164.5,524.5 1153.2,524.5 1153.2,524.9 1141.8,524.9 1141.8,525.4 1130.5,525.4 1130.5,525.8 1119.1,525.8 1119.1,526.2 1107.8,526.2 1107.8,526.7 1096.4,526.7 1096.4,527.1 1084.0,527.1 1084.0,527.3 1071.7,527.3 1071.7,527.5 1059.3,527.5 1059.3,527.7 1046.9,527.7 1046.9,528.0 1034.6,528.0 1034.6,528.2 1022.2,528.2 1022.2,528.4 1009.9,528.4 1009.9,528.6 997.5,528.6 997.5,528.8 985.1,528.8 985.1,529.0 972.8,529.0 972.8,529.2 960.4,529.2 960.4,529.5 948.0,529.5 948.0,529.7 935.7,529.7 935.7,529.9 923.3,529.9 923.3,530.1 913.2,530.1 913.2,529.4 903.1,529.4 903.1,528.7 893.0,528.7 893.0,528.0 891.6,528.0 891.6,520.2 878.9,520.2 878.9,516.0 866.3,516.0 866.3,511.8 853.6,511.8 853.6,507.5 841.0,507.5 841.0,503.3 828.3,503.3 828.3,499.1 815.7,499.1 815.7,493.2 803.0,493.2 803.0,487.3 790.4,487.3 790.4,481.4 777.7,481.4 777.7,475.5 765.1,475.5 765.1,469.6 752.5,469.6 752.5,464.5 739.8,464.5 739.8,459.5 727.2,459.5 727.2,454.4 714.5,454.4 714.5,449.4 701.9,449.4 701.9,444.3 689.2,444.3 689.2,438.4 676.6,438.4 676.6,432.5 663.9,432.5 663.9,426.6 651.3,426.6 651.3,420.7 638.6,420.7 638.6,414.8 626.0,414.8 626.0,409.7 613.3,409.7 613.3,404.7 600.7,404.7 600.7,399.6 588.0,399.6 588.0,394.6 575.4,394.6 575.4,389.5 562.8,389.5 562.8,383.2 550.1,383.2 550.1,376.9 537.4,376.9 537.4,370.5 524.8,370.5 524.8,364.2 512.2,364.2 512.2,358.6 499.5,358.6 499.5,353.0 486.9,353.0 486.9,347.4" fill="#6800a4"/><polygon points="485.6,336.5 495.3,336.5 495.3,328.1 508.0,328.1 508.0,318.6 520.6,318.6 520.6,309.1 531.8,309.1 531.8,303.5 543.1,303.5 543.1,297.9 554.3,297.9 554.3,292.3 568.0,292.3 568.0,283.9 581.7,283.9 581.7,275.4 595.4,275.4 595.4,270.1 609.1,270.1 609.1,264.9 619.6,264.9 619.6,260.7 630.2,260.7 630.2,256.4 640.8,256.4 640.8,252.2 651.3,252.2 651.3,248.0 663.9,248.0 663.9,241.7 680.8,241.7 680.8,234.1 691.3,234.1 691.3,229.4 701.9,229.4 701.9,224.8 714.5,224.8 714.5,221.7 727.2,221.7 727.2,218.5 739.8,218.5 739.8,217.8 752.5,217.8 752.5,217.1 765.1,217.1 765.1,216.4 776.7,216.4 776.7,209.3 788.4,209.3 788.4,202.1 800.0,202.1 800.0,195.0 811.6,195.0 811.6,193.4 823.2,193.4 823.2,191.9 834.9,191.9 834.9,190.3 846.5,190.3 846.5,188.8 858.1,188.8 858.1,187.2 869.8,187.2 869.8,185.6 881.4,185.6 881.4,184.1 893.0,184.1 893.0,182.5 904.7,182.5 904.7,182.4 916.5,182.4 916.5,182.2 928.2,182.2 928.2,182.1 940.0,182.1 940.0,181.9 951.7,181.9 951.7,181.8 963.5,181.8 963.5,181.6 975.2,181.6 975.2,181.5 986.9,181.5 986.9,181.4 998.7,181.4 998.7,181.2 1010.4,181.2 1010.4,181.1 1022.2,181.1 1022.2,180.9 1033.9,180.9 1033.9,180.8 1045.7,180.8 1045.7,180.6 1057.4,180.6 1057.4,180.5 1069.1,180.5 1069.1,180.4 1080.9,180.4 1080.9,180.2 1092.6,180.2 1092.6,180.1 1104.4,180.1 1104.4,179.9 1116.1,179.9 1116.1,179.8 1127.9,179.8 1127.9,179.6 1139.6,179.6 1139.6,179.5 1150.4,179.5 1150.4,180.6 1161.2,180.6 1161.2,181.7 1172.1,181.7 1172.1,182.9 1182.9,182.9 1182.9,184.0 1193.7,184.0 1193.7,185.1 1207.4,185.1 1207.4,188.0 1221.1,188.0 1221.1,190.9 1234.8,190.9 1234.8,193.8 1244.5,193.8 1244.5,198.1 1254.3,198.1 1254.3,202.4 1245.6,202.4 1245.6,209.8 1239.1,209.8 1239.1,224.9 1230.5,224.9 1230.5,244.4 1221.8,244.4 1221.8,263.9 1208.9,263.9 1208.9,289.8 1195.9,289.8 1195.9,311.5 1180.0,311.5 1180.0,340.0 1176.0,340.0 1176.0,400.0 1187.5,400.0 1187.5,405.4 1199.0,405.4 1199.0,410.8 1210.5,410.8 1210.5,416.3 1222.0,416.3 1222.0,421.7 1233.5,421.7 1233.5,427.1 1245.1,427.1 1245.1,432.5 1256.6,432.5 1256.6,437.9 1268.1,437.9 1268.1,443.4 1279.6,443.4 1279.6,448.8 1291.1,448.8 1291.1,454.2 1278.1,454.2 1278.1,462.9 1268.0,462.9 1268.0,470.1 1257.9,470.1 1257.9,477.3 1247.8,477.3 1247.8,484.5 1237.0,484.5 1237.0,488.9 1226.2,488.9 1226.2,493.2 1214.7,493.2 1214.7,497.5 1203.1,497.5 1203.1,501.9 1191.6,501.9 1191.6,506.2 1187.2,506.2 1187.2,519.1 1175.9,519.1 1175.9,519.5 1164.5,519.5 1164.5,520.0 1153.2,520.0 1153.2,520.4 1141.8,520.4 1141.8,520.9 1130.5,520.9 1130.5,521.3 1119.1,521.3 1119.1,521.7 1107.8,521.7 1107.8,522.2 1096.4,522.2 1096.4,522.6 1084.0,522.6 1084.0,522.8 1071.7,522.8 1071.7,523.0 1059.3,523.0 1059.3,523.2 1046.9,523.2 1046.9,523.5 1034.6,523.5 1034.6,523.7 1022.2,523.7 1022.2,523.9 1009.9,523.9 1009.9,524.1 997.5,524.1 997.5,524.3 985.1,524.3 985.1,524.5 972.8,524.5 972.8,524.7 960.4,524.7 960.4,525.0 948.0,525.0 948.0,525.2 935.7,525.2 935.7,525.4 923.3,525.4 923.3,525.6 913.2,525.6 913.2,524.9 903.1,524.9 903.1,524.2 893.0,524.2 893.0,523.5 891.6,523.5 891.6,515.7 878.9,515.7 878.9,511.5 866.3,511.5 866.3,507.3 853.6,507.3 853.6,503.0 841.0,503.0 841.0,498.8 828.3,498.8 828.3,494.6 815.7,494.6 815.7,488.7 803.0,488.7 803.0,482.8 790.4,482.8 790.4,476.9 777.7,476.9 777.7,471.0 765.1,471.0 765.1,465.1 752.5,465.1 752.5,460.0 739.8,460.0 739.8,455.0 727.2,455.0 727.2,449.9 714.5,449.9 714.5,444.9 701.9,444.9 701.9,439.8 689.2,439.8 689.2,433.9 676.6,433.9 676.6,428.0 663.9,428.0 663.9,422.1 651.3,422.1 651.3,416.2 638.6,416.2 638.6,410.3 626.0,410.3 626.0,405.2 613.3,405.2 613.3,400.2 600.7,400.2 600.7,395.1 588.0,395.1 588.0,390.1 575.4,390.1 575.4,385.0 562.8,385.0 562.8,378.7 550.1,378.7 550.1,372.4 537.4,372.4 537.4,366.0 524.8,366.0 524.8,359.7 512.2,359.7 512.2,354.1 499.5,354.1 499.5,348.5 486.9,348.5 486.9,342.9" fill="url(#vox)"/><path d="M470 198.9 L1270 174.9M470 205.4 L1270 181.4M470 211.9 L1270 187.9M470 218.9 L1270 194.9M470 225.9 L1270 201.9M470 233.4 L1270 209.4M470 240.9 L1270 216.9M470 248.9 L1270 224.9M470 257.4 L1270 233.4M470 265.9 L1270 241.9M470 274.9 L1270 250.9M470 284.9 L1270 260.9M470 295.9 L1270 271.9M470 307.9 L1270 283.9M470 320.9 L1270 296.9M470 334.9 L1270 310.9" stroke="#500080" stroke-width="2.6" opacity="0.75" clip-path="url(#pclip)"/><path d="M456.6 194.4L-248.8 1680.8M569.2 192.4L34.9 1669.3M681.4 190.5L316.1 1657.9M793.2 188.6L594.8 1646.6M904.6 186.7L871.1 1635.5M1015.6 184.7L1144.9 1624.4M1126.2 182.8L1416.4 1613.4M1236.4 180.9L1685.5 1602.5M1346.2 179.0L1952.2 1591.7M1455.7 177.1L2216.7 1581.0M1564.7 175.3L2478.8 1570.4" stroke="#c0b0c8" stroke-width="1" opacity="0.55" fill="none" clip-path="url(#pclip)"/><path d="M456.6 194.4L1564.7 175.3M426.6 257.7L1604.6 236.2M392.5 329.6L1649.9 305.2M353.3 412.0L1701.6 384.1M308.1 507.5L1761.2 475.2M255.0 619.2L1830.9 581.5M192.0 752.0L1913.2 707.2M116.0 912.2L2012.1 858.1M22.4 1109.3L2133.0 1042.6M-95.5 1357.8L2284.2 1273.4M-248.8 1680.8L2478.8 1570.4" stroke="#c0b0c8" stroke-width="1" stroke-dasharray="18 22" opacity="0.5" fill="none" clip-path="url(#pclip)"/><clipPath id="sphclip"><path d="M768.5 195 L770.4 216.7 Q774 232 784 245 Q800 260 826.5 264.3 Q850 262 866 256 Q882 242 888 225 L893.7 192 Q891 176 885 166 L876 156 L870 148 L858 138.5 L845 139.5 L840 137 L828 140 L818 139 L812 142 L802 143.4 L795 150 L787 158.7 L780 170 L776.5 180 Z"/></clipPath><path d="M768.5 195 L770.4 216.7 Q774 232 784 245 Q800 260 826.5 264.3 Q850 262 866 256 Q882 242 888 225 L893.7 192 Q891 176 885 166 L876 156 L870 148 L858 138.5 L845 139.5 L840 137 L828 140 L818 139 L812 142 L802 143.4 L795 150 L787 158.7 L780 170 L776.5 180 Z" fill="url(#sph)"/><path d="M760 142 Q830 155 900 140M760 148 Q830 161 900 146M760 154 Q830 167 900 152M760 160 Q830 173 900 158M760 167 Q830 180 900 165M760 174 Q830 187 900 172M760 181 Q830 194 900 179M760 188 Q830 201 900 186M760 195 Q830 208 900 193M760 202 Q830 215 900 200M760 209 Q830 222 900 207M760 216 Q830 229 900 214M760 223 Q830 236 900 221M760 230 Q830 243 900 228M760 237 Q830 250 900 235M760 244 Q830 257 900 242M760 251 Q830 264 900 249M760 257 Q830 270 900 255" stroke="#000" stroke-width="1.6" opacity="0.28" fill="none" clip-path="url(#sphclip)"/><path d="M768.5 195 L770.4 216.7 Q774 232 784 245 Q800 260 826.5 264.3 Q850 262 866 256 Q882 242 888 225 L893.7 192 Q891 176 885 166 L876 156 L870 148 L858 138.5 L845 139.5 L840 137 L828 140 L818 139 L812 142 L802 143.4 L795 150 L787 158.7 L780 170 L776.5 180 Z" fill="url(#vox2)"/><polygon points="1171.4,254.4 1192.4,340.8 1179.3,457.4 1175.4,457.4 1158.3,360.5" fill="url(#walls)"/><polygon points="1171.4,254.4 1192.4,340.8 1179.3,457.4 1175.4,457.4 1158.3,360.5" fill="url(#vox2)"/><polygon points="1171.4,253.1 1179.3,253.1 1198.9,338.2 1192.4,340.8" fill="#ec1c00"/><polygon points="1192.4,339.5 1291.9,338.2 1298.5,344.8 1294.5,423.4 1293.2,449.6 1179.3,457.4" fill="url(#wallf)"/><polygon points="1192.4,339.5 1291.9,338.2 1298.5,344.8 1294.5,423.4 1293.2,449.6 1179.3,457.4" fill="url(#vox2)"/></svg><svg class="r" style="left:320px;top:575px" width="20" height="16"><path d="M7 8 L13 4.5 L13 11.5 Z" fill="#6e6e6e"/><path d="M1 4.5h3M1 7.5h3M1 10.5h3" stroke="#c9c6c2" stroke-width="0.8"/></svg><svg class="r" style="left:1630px;top:575px" width="16" height="16"><path d="M10 8 L4 4.5 L4 11.5 Z" fill="#6e6e6e"/></svg><div class="r" style="left:1919px;top:127px;width:1px;height:940px;background:#c4c0ba;"></div><div class="r" style="left:1860px;top:590px;width:60px;height:610px;background:linear-gradient(90deg,rgba(0,0,0,0),rgba(0,0,0,0.03) 50%,rgba(0,0,0,0.11));-webkit-mask-image:linear-gradient(rgba(0,0,0,0),#000 200px);"></div><div class="r" style="left:0px;top:1108px;width:1920px;height:22px;background:#c8c8c8;"></div><svg class="r" style="left:0;top:1108px" width="24" height="22"><circle cx="11.8" cy="11.3" r="6.6" fill="#fff" stroke="#3a3a3a" stroke-width="1.7"/><path d="M11.3 7.3 V11.8 H15" fill="none" stroke="#222" stroke-width="1.5"/></svg><div class="t" style="left:26.6px;top:1111.4px;font-size:14.7px;line-height:14.7px;color:#3c3c3c;font-weight:normal;">Time</div><div class="r" style="left:1905px;top:1112px;width:12.5px;height:14.5px;box-sizing:border-box;border:1px solid #c2bcb4;border-radius:4px;background:#fff;"></div><svg class="r" style="left:1905px;top:1112px" width="13" height="15"><path d="M3.3 4.3L9.2 10.2M9.2 4.3L3.3 10.2" stroke="#5a5a5a" stroke-width="2.6"/></svg><div class="t" style="left:11.6px;top:1142.6px;font-size:14.7px;line-height:14.7px;color:#3c3c3c;font-weight:normal;">ROS Time:</div><div class="r" style="left:87.5px;top:1137.3px;width:126.0px;height:24.3px;box-sizing:border-box;border:1px solid #b0aca6;border-radius:3px;background:#fff;"></div><div class="t" style="left:92.0px;top:1142.6px;font-size:14.7px;line-height:14.7px;color:#2e2e2e;font-weight:normal;">126.38</div><div class="t" style="left:221.4px;top:1142.6px;font-size:14.7px;line-height:14.7px;color:#3c3c3c;font-weight:normal;">ROS Elapsed:</div><div class="r" style="left:316.4px;top:1137.3px;width:126.0px;height:24.3px;box-sizing:border-box;border:1px solid #b0aca6;border-radius:3px;background:#fff;"></div><div class="t" style="left:320.9px;top:1142.6px;font-size:14.7px;line-height:14.7px;color:#2e2e2e;font-weight:normal;">120.56</div><div class="t" style="left:450.2px;top:1142.6px;font-size:14.7px;line-height:14.7px;color:#3c3c3c;font-weight:normal;">Wall Time:</div><div class="r" style="left:527.6px;top:1137.3px;width:125.69999999999993px;height:24.3px;box-sizing:border-box;border:1px solid #b0aca6;border-radius:3px;background:#fff;"></div><div class="t" style="left:532.1px;top:1142.6px;font-size:14.7px;line-height:14.7px;color:#2e2e2e;font-weight:normal;">1446456017.83</div><div class="t" style="left:661.4px;top:1142.6px;font-size:14.7px;line-height:14.7px;color:#3c3c3c;font-weight:normal;">Wall Elapsed:</div><div class="r" style="left:757.3px;top:1137.3px;width:126.20000000000005px;height:24.3px;box-sizing:border-box;border:1px solid #b0aca6;border-radius:3px;background:#fff;"></div><div class="t" style="left:761.8px;top:1142.6px;font-size:14.7px;line-height:14.7px;color:#2e2e2e;font-weight:normal;">186.37</div><div class="r" style="left:1792px;top:1143px;width:14px;height:14px;box-sizing:border-box;border:1px solid #a9a59f;border-radius:3px;background:#fff;"></div><div class="t" style="left:1814.5px;top:1142.1px;font-size:14.7px;line-height:14.7px;color:#3c3c3c;font-weight:normal;">Experimental</div><div class="r" style="left:0px;top:1170px;width:1920px;height:1px;background:#d8d5d1;"></div><div class="r" style="left:3.5px;top:1175px;width:49px;height:21.5px;box-sizing:border-box;border:1px solid #b8b4ae;border-radius:3px;background:linear-gradient(#fbfbfa,#eceae7);"></div><div class="t" style="left:9.5px;top:1178.2px;font-size:14.2px;line-height:14.2px;color:#3c3c3c;font-weight:normal;">Reset</div><div class="t" style="left:60.6px;top:1178.3px;font-size:14.3px;line-height:14.3px;color:#3c3c3c;"><b>Left-Click:</b> Rotate. <b>Middle-Click:</b> Move X/Y. <b>Right-Click/Mouse Wheel:</b>: Zoom. <b>Shift</b>: More options.</div><div class="t" style="right:1601.5px;top:1173.8px;font-size:14.7px;line-height:14.7px;color:#3c3c3c;font-weight:normal;">30 fps</div><div class="r" style="left:0px;top:0px;width:1920px;height:24px;background:linear-gradient(#5c5952,#48463f 60%,#3e3d38);"></div><div class="r" style="left:0px;top:24px;width:1920px;height:3px;background:linear-gradient(rgba(0,0,0,0.35),rgba(0,0,0,0));"></div><svg class="r" style="left:1748px;top:0px" width="172" height="24" viewBox="1748 0 172 24">
<path d="M1755.8 3.7 L1751.1 8.6 L1754 8.6 L1754 16.3 L1757.6 16.3 L1757.6 8.6 L1760.6 8.6 Z" fill="#dfdbd2"/>
<path d="M1764 21.1 L1759 16.2 L1762 16.2 L1762 8.2 L1766 8.2 L1766 16.2 L1769 16.2 Z" fill="#dfdbd2"/>
<rect x="1782" y="2" width="20" height="20" rx="2.5" fill="#dfdbd2"/>
<path d="M1815 10 L1817.5 10 L1822 6.5 L1822 18 L1817.5 14.5 L1815 14.5 Z" fill="#85837d"/>
<path d="M1825.3 9.8 L1831.3 15.8 M1831.3 9.8 L1825.3 15.8" stroke="#85837d" stroke-width="1.6"/>
<g transform="translate(1904 12)" fill="none" stroke="#dfdbd2">
<circle r="5.6" stroke-width="2.2" stroke-dasharray="28 7.2" transform="rotate(-67)"/>
<path d="M0 -8.2 L0 -1.5" stroke-width="2.2"/>
<path d="M-8 0 L-6.3 0 M8 0 L6.3 0 M0 8 L0 6.3 M-5.7 5.7 L-4.5 4.5 M5.7 5.7 L4.5 4.5 M-5.7 -5.7 L-4.5 -4.5 M5.7 -5.7 L4.5 -4.5" stroke-width="2.4"/>
</g>
</svg><div class="t" style="left:1785.6px;top:6.2px;font-size:12.3px;line-height:12.3px;color:#2e2e2e;font-weight:normal;">En</div><div class="t" style="left:1847.6px;top:4.7px;font-size:14px;line-height:14px;color:#dfdbd2;font-weight:normal;">10:20</div><div class="r" style="left:1920px;top:24px;width:1600px;height:1176px;background:#2e2e2e;"></div><div class="r" style="left:2002px;top:35px;width:71px;height:27px;box-sizing:border-box;border:1px solid #141414;border-bottom:none;border-radius:0 4px 0 0;background:#6e6e6e;"></div><div class="r" style="left:1929.5px;top:61.5px;width:250px;height:1129px;box-sizing:border-box;border:1px solid #141414;border-radius:0 5px 5px 5px;background:#808080;"></div><div class="r" style="left:1929.5px;top:33.5px;width:73px;height:29.5px;box-sizing:border-box;border:1px solid #141414;border-bottom:none;border-radius:4px 4px 0 0;background:linear-gradient(#8a8a8a,#808080);"></div><div class="t" style="left:1946.0px;top:40.2px;font-size:15px;line-height:15px;color:#e4e4e4;font-weight:normal;">World</div><div class="t" style="left:2017.0px;top:41.1px;font-size:15px;line-height:15px;color:#e4e4e4;font-weight:normal;">Insert</div><div class="t" style="left:1959.5px;top:71.0px;font-size:14.6px;line-height:14.6px;color:#e4e4e4;font-weight:normal;">Scene</div><div class="t" style="left:1959.5px;top:90.0px;font-size:14.6px;line-height:14.6px;color:#e4e4e4;font-weight:normal;">Spherical Coordinates</div><div class="t" style="left:1959.5px;top:109.0px;font-size:14.6px;line-height:14.6px;color:#e4e4e4;font-weight:normal;">Physics</div><div class="t" style="left:1959.5px;top:128.0px;font-size:14.6px;line-height:14.6px;color:#e4e4e4;font-weight:normal;">Models</div><div class="t" style="left:1979.0px;top:147.0px;font-size:14.6px;line-height:14.6px;color:#e4e4e4;font-weight:normal;">ground_plane</div><div class="t" style="left:1979.0px;top:166.0px;font-size:14.6px;line-height:14.6px;color:#e4e4e4;font-weight:normal;">firefly</div><div class="t" style="left:1979.0px;top:185.0px;font-size:14.6px;line-height:14.6px;color:#e4e4e4;font-weight:normal;">unit_sphere_1</div><div class="t" style="left:1979.0px;top:204.0px;font-size:14.6px;line-height:14.6px;color:#e4e4e4;font-weight:normal;">unit_box_1</div><div class="t" style="left:1999.0px;top:223.0px;font-size:14.6px;line-height:14.6px;color:#e4e4e4;font-weight:normal;">link</div><div class="t" style="left:1959.5px;top:242.0px;font-size:14.6px;line-height:14.6px;color:#e4e4e4;font-weight:normal;">Lights</div><svg class="r" style="left:1920px;top:120px" width="100" height="140" viewBox="1920 120 100 140"><path d="M1944.5 131.8 L1951.5 131.8 L1948.0 137.8 Z" fill="#5a5a5a"/><path d="M1965 150.3 L1971 153.8 L1965 157.3 Z" fill="#5a5a5a"/><path d="M1965 169.3 L1971 172.8 L1965 176.3 Z" fill="#5a5a5a"/><path d="M1965 188.3 L1971 191.8 L1965 195.3 Z" fill="#5a5a5a"/><path d="M1964.5 207.8 L1971.5 207.8 L1968.0 213.8 Z" fill="#5a5a5a"/><path d="M1945 245.3 L1951 248.8 L1945 252.3 Z" fill="#5a5a5a"/></svg><div class="r" style="left:1936px;top:444px;width:237px;height:17px;background:#3c3c3c;"></div><div class="t" style="left:1936.0px;top:446.5px;font-size:14.2px;line-height:14.2px;color:#e4e4e4;font-weight:bold;">Property</div><div class="t" style="left:2055.0px;top:446.5px;font-size:14.2px;line-height:14.2px;color:#e4e4e4;font-weight:bold;">Value</div><svg class="r" style="left:2050px;top:438px" width="10" height="5"><path d="M1.5 0.5v3M4 0.5v3M6.5 0.5v3" stroke="#fff" stroke-width="1.2"/></svg><svg class="r" style="left:2182px;top:608px" width="6" height="10"><path d="M0.5 1.2h4.5M0.5 4.4h4.5M0.5 7.6h4.5" stroke="#fff" stroke-width="1.8"/></svg><svg class="r" style="left:3503px;top:608px" width="6" height="10"><path d="M0.5 1.2h4.5M0.5 4.4h4.5M0.5 7.6h4.5" stroke="#fff" stroke-width="1.8"/></svg><div class="r" style="left:2189.5px;top:33.5px;width:1311.0px;height:1157.0px;box-sizing:border-box;border:1px solid #141414;border-radius:8px;background:#808080;overflow:hidden;"></div><div class="r" style="left:2190.5px;top:34.5px;width:1309.0px;height:37.5px;background:linear-gradient(90deg,#888 0%,#808080 40%,#7e7e7e 100%);border-radius:7px 7px 0 0;"></div><div class="r" style="left:2190px;top:72px;width:1310px;height:1.2999999999999972px;background:#111;"></div><div class="r" style="left:2190px;top:1148.5px;width:1310px;height:1.2999999999999545px;background:#111;"></div><div class="r" style="left:2190.5px;top:1149.8px;width:1309.0px;height:39.700000000000045px;background:linear-gradient(#888888,#7c7c7c);border-radius:0 0 7px 7px;"></div><svg class="r" style="left:2190px;top:34px" width="460" height="40" viewBox="2190 34 460 40"><rect x="2203.5" y="37.5" width="28.5" height="32" rx="6" fill="#3a3a3a" stroke="#222" stroke-width="1"/><path d="M2207 41 L2217 43.5 L2214.3 46.2 L2227.5 59.5 L2224.5 62.5 L2211.3 49.2 L2208.5 52 Z" fill="#e6e6e6"/><g transform="translate(2250 53.5)" fill="#dcdcdc"><path d="M-1 -9h2v18h-2zM-9 -1h18v2h-18z"/><path d="M0 -11.5 L-4 -7 L4 -7Z M0 11.5 L-4 7 L4 7Z M-11.5 0 L-7 -4 L-7 4Z M11.5 0 L7 -4 L7 4Z"/></g><g transform="translate(2280 53.5)" fill="none" stroke="#dcdcdc" stroke-width="2.2"><path d="M-9 2 A9 9 0 0 1 6 -7"/><path d="M9 -2 A9 9 0 0 1 -6 7"/></g><path d="M2284 42.5 L2290 46 L2283 50Z M2276 64.5 L2270 61 L2277 57Z" fill="#dcdcdc"/><g fill="none" stroke="#dcdcdc" stroke-width="1.3"><path d="M2300.5 42.5 H2313 M2322.5 52 V64.5 H2310 M2300.5 42.5 V55"/></g><path d="M2302 63 L2320.5 44.5" stroke="#dcdcdc" stroke-width="2.2"/><path d="M2322.5 42.5 L2322.5 50 L2315 42.5Z M2300.5 64.5 L2300.5 57 L2308 64.5Z" fill="#dcdcdc"/><path d="M2333 45 V65" stroke="#dcdcdc" stroke-width="1.4"/><path d="M2437 45 V65" stroke="#dcdcdc" stroke-width="1.4"/><path d="M2541 45 V65" stroke="#dcdcdc" stroke-width="1.4"/><path d="M2583 45 V65" stroke="#dcdcdc" stroke-width="1.4"/><path d="M2342.5 46.5 L2357 45.5 L2365 49.5 L2365 63 L2350.5 64.5 L2342.5 62 Z" fill="#cfcfcf"/><path d="M2342.5 46.5 L2357 45.5 L2365 49.5 L2350.5 50.5 Z" fill="#e2e2e2"/><path d="M2350.5 50.5 L2365 49.5 L2365 63 L2350.5 64.5Z" fill="#c6c6c6"/><defs><radialGradient id="gs" cx="0.35" cy="0.35" r="0.7"><stop offset="0" stop-color="#f2f2f2"/><stop offset="1" stop-color="#bdbdbd"/></radialGradient><linearGradient id="gc" x1="0" x2="1"><stop offset="0" stop-color="#d8d8d8"/><stop offset="1" stop-color="#c4c4c4"/></linearGradient></defs><circle cx="2384.3" cy="53.2" r="11.5" fill="url(#gs)"/><path d="M2406 45.5 V62 A9.3 3.5 0 0 0 2424.5 62 V45.5 Z" fill="url(#gc)"/><ellipse cx="2415.3" cy="45.5" rx="9.3" ry="3.6" fill="#e4e4e4"/><g transform="translate(2457.5 53.5)" fill="#dcdcdc"><circle r="4.8"/><path d="M0 -11 L-1.8 -8 L1.8 -8Z" transform="rotate(0)"/><path d="M0 -8 V-6.5" stroke="#dcdcdc" stroke-width="0.8" transform="rotate(0)"/><path d="M0 -11 L-1.8 -8 L1.8 -8Z" transform="rotate(45)"/><path d="M0 -8 V-6.5" stroke="#dcdcdc" stroke-width="0.8" transform="rotate(45)"/><path d="M0 -11 L-1.8 -8 L1.8 -8Z" transform="rotate(90)"/><path d="M0 -8 V-6.5" stroke="#dcdcdc" stroke-width="0.8" transform="rotate(90)"/><path d="M0 -11 L-1.8 -8 L1.8 -8Z" transform="rotate(135)"/><path d="M0 -8 V-6.5" stroke="#dcdcdc" stroke-width="0.8" transform="rotate(135)"/><path d="M0 -11 L-1.8 -8 L1.8 -8Z" transform="rotate(180)"/><path d="M0 -8 V-6.5" stroke="#dcdcdc" stroke-width="0.8" transform="rotate(180)"/><path d="M0 -11 L-1.8 -8 L1.8 -8Z" transform="rotate(225)"/><path d="M0 -8 V-6.5" stroke="#dcdcdc" stroke-width="0.8" transform="rotate(225)"/><path d="M0 -11 L-1.8 -8 L1.8 -8Z" transform="rotate(270)"/><path d="M0 -8 V-6.5" stroke="#dcdcdc" stroke-width="0.8" transform="rotate(270)"/><path d="M0 -11 L-1.8 -8 L1.8 -8Z" transform="rotate(315)"/><path d="M0 -8 V-6.5" stroke="#dcdcdc" stroke-width="0.8" transform="rotate(315)"/></g><circle cx="2484.5" cy="47.5" r="6" fill="#dcdcdc"/><g stroke="#dcdcdc" stroke-width="0.9" fill="none"><path d="M2490 47.5 L2498.5 49.5 M2489 51 L2497 55 M2487 53.5 L2492 60.5 M2485 54 L2487.5 63"/></g><g fill="#dcdcdc"><path d="M2499.5 49.8 L2496 47.5 L2496 52Z M2498 55.6 L2494.5 52.8 L2494 57.5Z M2493.5 62 L2493 57.5 L2490 60Z M2488 64.5 L2489.5 60 L2485.5 61Z"/></g><g stroke="#dcdcdc" stroke-width="1.6"><path d="M2507 55 L2522 45.5 M2512 59.5 L2527 50 M2518 64 L2530 56.5"/></g><g fill="#dcdcdc"><path d="M2506 56 L2508 51.5 L2510.5 54.5Z M2511 60.5 L2513 56 L2515.5 59Z M2517 65 L2519 60.5 L2521.5 63.5Z"/></g><rect x="2550" y="47" width="23" height="15.5" rx="1.5" fill="#dcdcdc"/><rect x="2554" y="44.5" width="7" height="3" fill="#dcdcdc"/><circle cx="2561" cy="55" r="4.2" fill="#808080"/><circle cx="2561" cy="55" r="2.8" fill="#dcdcdc"/><rect x="2566" y="49.5" width="4.5" height="2.5" fill="#808080"/><path d="M2595 45 H2602 L2605 48 V61 H2595Z" fill="#9a9a9a"/><path d="M2599 48 H2607 L2611 52 V65 H2599Z" fill="#9a9a9a" stroke="#888" stroke-width="0.6"/><rect x="2624.5" y="47" width="13" height="17" rx="1.5" fill="none" stroke="#9a9a9a" stroke-width="1.2"/><rect x="2628" y="45" width="6" height="3" fill="#9a9a9a"/><path d="M2631 51 H2638 L2642 55 V65.5 H2631Z" fill="#9a9a9a"/></svg><svg class="r" style="left:2350px;top:1150px" width="60" height="40" viewBox="2350 1150 60 40"><rect x="2363" y="1161" width="4.6" height="17" fill="#e0e0e0"/><rect x="2371" y="1161" width="4.6" height="17" fill="#e0e0e0"/><path d="M2400 1163 L2405.5 1169.5 L2400 1176 Z" fill="#9c9c9c"/><rect x="2406" y="1162" width="3" height="15" fill="#9c9c9c"/></svg><div class="t" style="left:2423.3px;top:1162.8px;font-size:14.4px;line-height:14.4px;color:#e8e8e8;font-weight:normal;">Steps:</div><div class="t" style="left:2474.0px;top:1162.8px;font-size:14.4px;line-height:14.4px;color:#e8e8e8;font-weight:normal;">1</div><svg class="r" style="left:2482px;top:1170px" width="12" height="10"><path d="M1.5 2.5 L8 2.5 L4.75 6.5Z" fill="#e0e0e0"/></svg><div class="t" style="left:2501.5px;top:1162.8px;font-size:14.4px;line-height:14.4px;color:#e8e8e8;font-weight:normal;">Real Time Factor:</div><div class="r" style="left:2621.3px;top:1160.3px;width:89.0px;height:18.7px;border-radius:3px;background:#6e6e6e;"></div><div class="t" style="left:2624.1px;top:1162.8px;font-size:14.4px;line-height:14.4px;color:#2a2a2a;font-weight:normal;">0.88</div><div class="r" style="left:2787.3px;top:1160.3px;width:110.0px;height:18.7px;border-radius:3px;background:#6e6e6e;"></div><div class="t" style="left:2790.1px;top:1162.8px;font-size:14.4px;line-height:14.4px;color:#2a2a2a;font-weight:normal;">00 00:02:06.210</div><div class="r" style="left:2978px;top:1160.3px;width:110px;height:18.7px;border-radius:3px;background:#6e6e6e;"></div><div class="t" style="left:2980.8px;top:1162.8px;font-size:14.4px;line-height:14.4px;color:#2a2a2a;font-weight:normal;">00 00:02:25.491</div><div class="r" style="left:3168px;top:1160.3px;width:109px;height:18.7px;border-radius:3px;background:#6e6e6e;"></div><div class="t" style="left:3170.8px;top:1162.8px;font-size:14.4px;line-height:14.4px;color:#2a2a2a;font-weight:normal;">12621</div><div class="t" style="left:2717.5px;top:1162.8px;font-size:14.4px;line-height:14.4px;color:#e8e8e8;font-weight:normal;">Sim Time:</div><div class="t" style="left:2903.0px;top:1162.8px;font-size:14.4px;line-height:14.4px;color:#e8e8e8;font-weight:normal;">Real Time:</div><div class="t" style="left:3094.5px;top:1162.8px;font-size:14.4px;line-height:14.4px;color:#e8e8e8;font-weight:normal;">Iterations:</div><div class="r" style="left:3287.5px;top:1157.3px;width:48px;height:24.5px;box-sizing:border-box;border:1px solid #6a6a6a;background:#4a4a4a;"></div><div class="t" style="left:3290.5px;top:1162.8px;font-size:14.4px;line-height:14.4px;color:#e8e8e8;font-weight:normal;">Reset</div><svg class="r" style="left:2190px;top:73px" width="1310" height="1076" viewBox="2190 73 1310 1076"><rect x="2190" y="73" width="1310" height="1076" fill="#b3b3b3"/><polygon points="2190,453.8 3500,444.2 3500,1149 2190,1149" fill="#9b9b9b"/><path d="M1969.1 612.8L-28875.8 10243.7M2062.2 610.4L-15369.9 6822.9M2153.2 608.0L-8832.8 5167.1M2242.0 605.7L-4976.9 4190.5M2413.9 601.2L-629.8 3089.5M2496.9 599.1L715.8 2748.7M2578.2 597.0L1758.2 2484.7M2657.7 594.9L2589.6 2274.1M2811.8 590.9L3832.3 1959.3M2886.4 589.0L4308.8 1838.6M2959.4 587.1L4716.7 1735.3M3031.0 585.2L5069.8 1645.9M3169.8 581.6L5650.3 1498.9M3237.2 579.9L5891.9 1437.7M3303.2 578.1L6107.9 1383.0M3368.0 576.5L6302.1 1333.8M1811.2 632.7L3479.7 586.1M1737.8 653.0L3534.3 598.9M1650.6 677.3L3596.8 613.6M1545.3 706.5L3669.0 630.5M1252.0 788.0L3853.2 673.7M1039.2 847.1L3973.2 701.9M750.9 927.2L4120.2 736.4M338.4 1041.8L4304.5 779.6M-1423.2 1531.1L4860.6 910.0M-3912.9 2222.7L5309.2 1015.2M-14153.8 5067.5L5988.2 1174.5" stroke="#5e5e5e" stroke-width="1" opacity="0.85" fill="none"/><path d="M1873.8 615.3L-73213.8 21473.6M2328.9 603.4L-2433.5 3546.3M2735.6 592.9L3268.0 2102.2M3101.1 583.4L5378.3 1567.8M3431.5 574.8L6477.7 1289.3M1873.8 615.3L3431.5 574.8M1415.6 742.5L3753.4 650.3M-300.6 1219.3L4542.2 835.3" stroke="#b0b0b0" stroke-width="1" opacity="0.6" fill="none"/><ellipse cx="2561" cy="744" rx="70" ry="22.5" transform="rotate(-4 2561 744)" fill="#4f4f4f"/><polygon points="2948,789 2998.6,885.4 3175.6,873.6 3155,834.4 2989,843.3" fill="#505050"/><defs><linearGradient id="gzs" x1="0" y1="603" x2="0" y2="734" gradientUnits="userSpaceOnUse"><stop offset="0" stop-color="#9a9a9a"/><stop offset="0.15" stop-color="#6a6a6a"/><stop offset="0.3" stop-color="#3a3a3a"/><stop offset="0.36" stop-color="#222"/><stop offset="1" stop-color="#1e1e1e"/></linearGradient><radialGradient id="cubet" cx="3085" cy="640" r="110" gradientUnits="userSpaceOnUse"><stop offset="0" stop-color="#ababab"/><stop offset="0.45" stop-color="#8a8a8a"/><stop offset="1" stop-color="#2a2a2a"/></radialGradient><linearGradient id="cubel" x1="0" y1="639" x2="0" y2="787" gradientUnits="userSpaceOnUse"><stop offset="0" stop-color="#6a6a6a"/><stop offset="0.35" stop-color="#3a3a3a"/><stop offset="0.6" stop-color="#222"/><stop offset="1" stop-color="#1f1f1f"/></linearGradient><linearGradient id="cubef" x1="2984" y1="669" x2="3130" y2="790" gradientUnits="userSpaceOnUse"><stop offset="0" stop-color="#1f1f1f"/><stop offset="0.55" stop-color="#1f1f1f"/><stop offset="0.75" stop-color="#1f1f1f"/><stop offset="1" stop-color="#1f1f1f"/></linearGradient><linearGradient id="cubef2" x1="3060" y1="670" x2="3162" y2="760" gradientUnits="userSpaceOnUse"><stop offset="0" stop-color="#5a5a5a" stop-opacity="0.9"/><stop offset="0.5" stop-color="#2a2a2a" stop-opacity="0.6"/><stop offset="1" stop-color="#1f1f1f" stop-opacity="0"/></linearGradient></defs><defs><clipPath id="gzsc"><ellipse cx="2570" cy="668.3" rx="67" ry="64.6"/></clipPath><linearGradient id="gzst" x1="0" y1="603" x2="0" y2="662" gradientUnits="userSpaceOnUse"><stop offset="0" stop-color="#969696"/><stop offset="0.45" stop-color="#6a6a6a"/><stop offset="0.8" stop-color="#4a4a4a"/><stop offset="1" stop-color="#333"/></linearGradient><filter id="gzsb" x="-10%" y="-10%" width="120%" height="120%"><feGaussianBlur stdDeviation="1.6"/></filter></defs><ellipse cx="2570" cy="668.3" rx="67.7" ry="65.3" fill="#1e1e1e"/><g clip-path="url(#gzsc)"><path d="M2498 656 Q2570 638 2642 664 L2642 595 L2498 595 Z" fill="url(#gzst)" filter="url(#gzsb)"/></g><defs><radialGradient id="ctop" cx="3080" cy="648" r="115" gradientTransform="translate(3080 648) scale(1 0.55) translate(-3080 -648)" gradientUnits="userSpaceOnUse"><stop offset="0" stop-color="#a9a9a9"/><stop offset="0.45" stop-color="#909090"/><stop offset="0.8" stop-color="#505050"/><stop offset="1" stop-color="#2a2a2a"/></radialGradient><linearGradient id="cfr" x1="3162" y1="670" x2="3125.5" y2="741.3" gradientUnits="userSpaceOnUse"><stop offset="0" stop-color="#8e8e8e"/><stop offset="0.4" stop-color="#555"/><stop offset="1" stop-color="#1f1f1f"/></linearGradient><linearGradient id="clf" x1="0" y1="639" x2="0" y2="800" gradientUnits="userSpaceOnUse"><stop offset="0" stop-color="#7a7a7a"/><stop offset="0.3" stop-color="#555"/><stop offset="0.6" stop-color="#2a2a2a"/><stop offset="1" stop-color="#1f1f1f"/></linearGradient><linearGradient id="clf2" x1="2950" y1="0" x2="2987" y2="0" gradientUnits="userSpaceOnUse"><stop offset="0" stop-color="#1f1f1f" stop-opacity="0"/><stop offset="1" stop-color="#1f1f1f" stop-opacity="0.85"/></linearGradient></defs><polygon points="2950.1,639.1 3097.5,634.4 3162.2,670.1 3154.2,834.4 2989,843.3 2948.2,786.5" fill="#1f1f1f"/><polygon points="2950.1,639.1 2984.2,669.4 2989,843.3 2948.2,786.5" fill="url(#clf)"/><polygon points="2950.1,639.1 2984.2,669.4 2989,843.3 2948.2,786.5" fill="url(#clf2)"/><polygon points="2984.2,669.4 3162.2,670.1 3157.7,762" fill="url(#cfr)"/><polygon points="2950.1,639.1 3097.5,634.4 3162.2,670.1 2984.2,669.4" fill="url(#ctop)"/><g stroke="#585858" fill="none" stroke-linecap="round"><path d="M2806.4 1015.1 L2841.2 1012 M2880.2 1008.9 L2908.9 1006.4 M2851.5 1019.2 L2840.2 1036.6 M2872 1018.2 L2891.5 1030.5 M2829 989.5 L2843.3 997.7 M2873 988.4 L2866 996" stroke-width="2.2"/><path d="M2806.4 1004.8 L2809.5 1028.4 M2904.8 996.6 L2915 1020.2 M2825.9 1028.4 L2855.6 1049.4 M2900.2 1022.8 L2885.8 1045.8 M2825.9 981.3 L2829 1001.8 M2876.1 984.3 L2882.2 997.7" stroke-width="3.4"/><path d="M2835 992 Q2855 987 2875 990 M2843 997 L2862 1012 M2850 1008 L2878 998 M2868 1004 L2884 1016 M2846 1003 L2858 1020 M2880 995 L2884 1010 M2852 995 L2870 996" stroke-width="2.6" opacity="0.9"/></g><g stroke-linecap="round"><path d="M2843 787 L2814 789 M2849 778 L2834 771 M2878 776 L2882 770 M2886 786 L2911 783.5 M2878 794 L2897 800 M2855 795 L2843 802" stroke="#f2f2f2" stroke-width="2.2"/><path d="M2835.8 799.4 L2841.1 815.2 M2885.2 799.4 L2892.3 812.8" stroke="#e8e8e8" stroke-width="1"/><polygon points="2842.9,785.3 2848.2,776.4 2882.4,776.4 2887,785.3 2881.7,795.8 2871.1,797.6 2857,797.6 2846.4,794" fill="#c9c9c9"/><polygon points="2859,781 2872,781 2870,795 2861,795" fill="#b0b0b0"/><path d="M2864 782 V794 M2867 782 V794" stroke="#8a8a8a" stroke-width="1"/><polygon points="2848.2,774.7 2855.2,771.9 2874.6,771.9 2882.4,776.4 2878.2,780 2853.5,780" fill="#f6f6f6"/><polygon points="2860,790 2869,789 2869,795 2860,796" fill="#2f7a2f"/></g><polygon points="2831.1,765.1 2832.7,778.0 2837.5,777.0 2833.5,764.5" fill="#e81010"/><polygon points="2873.7,764.2 2883.3,777.1 2887.1,773.7 2875.5,762.6" fill="#e81010"/><polygon points="2812.3,779.2 2814.2,792.7 2818.6,791.9 2815.7,778.6" fill="#1414e6"/><polygon points="2905.4,775.4 2913.2,788.5 2917.2,785.5 2907.4,774.0" fill="#1414e6"/><polygon points="2831.9,794.9 2857.9,807.0 2859.7,802.4 2832.7,793.1" fill="#1414e6"/><polygon points="2900.1,788.7 2886.9,801.2 2890.5,804.6 2901.9,790.3" fill="#1414e6"/></svg><div class="r" style="left:1920px;top:0px;width:1600px;height:24px;background:linear-gradient(#5c5952,#48463f 60%,#3e3d38);"></div><div class="r" style="left:1920px;top:24px;width:1600px;height:3px;background:linear-gradient(rgba(0,0,0,0.35),rgba(0,0,0,0));"></div><div class="t" style="left:1926.0px;top:4.9px;font-size:14.3px;line-height:14.3px;color:#dfdbd2;font-weight:bold;">Gazebo</div><svg class="r" style="left:3348px;top:0px" width="172" height="24" viewBox="1748 0 172 24">
<path d="M1755.8 3.7 L1751.1 8.6 L1754 8.6 L1754 16.3 L1757.6 16.3 L1757.6 8.6 L1760.6 8.6 Z" fill="#dfdbd2"/>
<path d="M1764 21.1 L1759 16.2 L1762 16.2 L1762 8.2 L1766 8.2 L1766 16.2 L1769 16.2 Z" fill="#dfdbd2"/>
<rect x="1782" y="2" width="20" height="20" rx="2.5" fill="#dfdbd2"/>
<path d="M1815 10 L1817.5 10 L1822 6.5 L1822 18 L1817.5 14.5 L1815 14.5 Z" fill="#85837d"/>
<path d="M1825.3 9.8 L1831.3 15.8 M1831.3 9.8 L1825.3 15.8" stroke="#85837d" stroke-width="1.6"/>
<g transform="translate(1904 12)" fill="none" stroke="#dfdbd2">
<circle r="5.6" stroke-width="2.2" stroke-dasharray="28 7.2" transform="rotate(-67)"/>
<path d="M0 -8.2 L0 -1.5" stroke-width="2.2"/>
<path d="M-8 0 L-6.3 0 M8 0 L6.3 0 M0 8 L0 6.3 M-5.7 5.7 L-4.5 4.5 M5.7 5.7 L4.5 4.5 M-5.7 -5.7 L-4.5 -4.5 M5.7 -5.7 L4.5 -4.5" stroke-width="2.4"/>
</g>
</svg><div class="t" style="left:3385.6px;top:6.2px;font-size:12.3px;line-height:12.3px;color:#2e2e2e;font-weight:normal;">En</div><div class="t" style="left:3447.6px;top:4.7px;font-size:14px;line-height:14px;color:#9fc0e8;font-weight:normal;">10:20</div></body></html>
